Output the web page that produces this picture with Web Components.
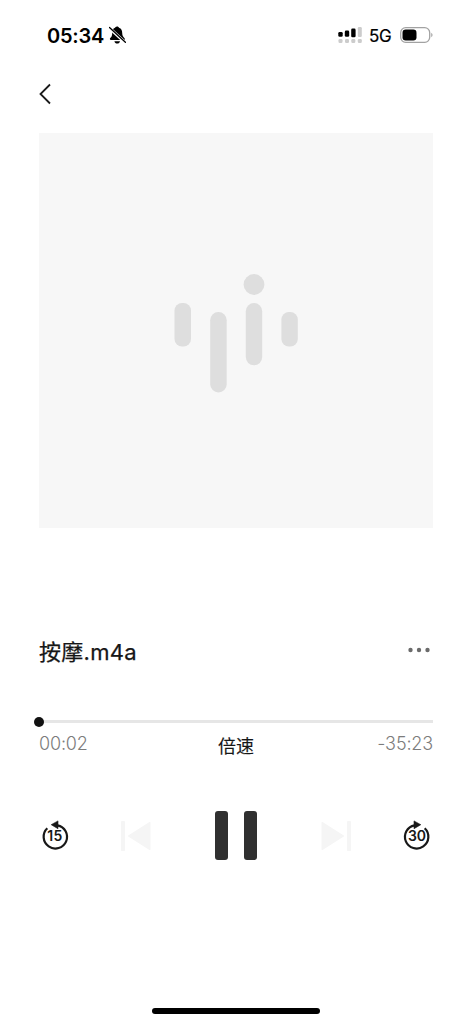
<!DOCTYPE html>
<html lang="zh">
<head>
<meta charset="utf-8">
<title>按摩.m4a</title>
<style>
html,body{margin:0;height:100%;background:#fff}
body{overflow:hidden;font-family:Inter,"Noto Sans CJK SC",sans-serif;color:#111}
</style>
</head>
<body>
<audio-player></audio-player>
<script>
function define(name, html) {
  const t = document.createElement('template');
  t.innerHTML = html;
  customElements.define(name, class extends HTMLElement {
    constructor() {
      super();
      this.attachShadow({mode: 'open'}).append(t.content.cloneNode(true));
    }
  });
}

define('status-bar', `
<style>
:host{display:flex;align-items:center;height:70px;padding:0 38px 0 47px;box-sizing:border-box;color:#000}
svg{display:block;flex:none}
time{font-size:20px;font-weight:600;line-height:24px;width:62px;white-space:nowrap;letter-spacing:-.2px;padding-top:2px}
.net{font-size:17px;font-weight:400;-webkit-text-stroke:.2px;line-height:22px;width:31px;margin-left:7px;letter-spacing:-.3px;padding-top:2px}
.gap{flex:1}
</style>
<time>05:34</time>
<svg width="17" height="18" viewBox="0 0 17 18"><path d="M8 0.500c-1.200 0-1.800.8-2 1.300C3.800 2.700 3.200 4.500 3.200 7c0 3-.7 3.700-2 5.100-.7.8-.3 1.900.7 1.900h12.900c1 0 1.400-1 .7-1.800-1.600-1.700-2.200-2.200-2.300-5.200 0-2.600-.8-4.400-3.200-5.200C9.800 1.200 9.200.5 8 .5z"/><path d="M5.400 15.200h5.600c-.3 1.500-1.400 2.300-2.800 2.300s-2.500-.8-2.800-2.300z"/><path d="M.3 1.900l16 14.800" stroke="#fff" stroke-width="3"/><path d="M.5 1.400l15.900 14.800" stroke="#000" stroke-width="1.300" stroke-linecap="round"/></svg>
<span class="gap"></span>
<svg width="24" height="18" viewBox="0 0 24 18"><g fill="#000"><rect x=".3" y="6" width="4.400" height="4.800" rx="1.300"/><rect x="6.800" y="4.600" width="4.400" height="6.200" rx="1.300"/><rect x="13.200" y="2.600" width="4.400" height="8.600" rx="1.300"/></g><g fill="#ccc"><rect x="19.800" y="1" width="4" height="10" rx="1.200"/><rect x=".5" y="13" width="4" height="4" rx="1.200"/><rect x="7" y="13" width="4" height="4" rx="1.200"/><rect x="13.300" y="13" width="4" height="4" rx="1.200"/><rect x="19.800" y="13" width="4" height="4" rx="1.200"/></g></svg>
<span class="net">5G</span>
<svg width="34" height="18" viewBox="0 0 34 18"><rect x=".7" y="1.700" width="29" height="14.600" rx="5" fill="#fff" stroke="#a2a2a2" stroke-width="1.300"/><rect x="2.500" y="3.500" width="14" height="11" rx="3.200"/><path d="M31.300 6.800c1.600.8 1.600 3.600 0 4.400z" fill="#999"/></svg>`);

define('back-button', `
<style>
:host{display:flex;align-items:center;height:48px;padding-left:39px}
svg{display:block}
</style>
<svg width="12" height="22" viewBox="0 0 12 22"><path d="M11 1.500L1.500 11l9.500 9.500" fill="none" stroke="#1a1a1a" stroke-width="1.800"/></svg>`);

define('cover-art', `
<style>
:host{display:block;height:395px;margin:15px 39px 0;background:#f7f7f7}
svg{display:block;width:100%;height:100%}
</style>
<svg viewBox="39 133 394 395" fill="#dedede"><rect x="174.500" y="303" width="16.500" height="43.500" rx="7.500"/><rect x="210.200" y="312" width="16.500" height="80.500" rx="8.200"/><rect x="245.800" y="303" width="16.400" height="62.300" rx="8.200"/><rect x="281.400" y="312" width="16.400" height="34.500" rx="7.500"/><circle cx="254" cy="284.500" r="10.400"/></svg>`);

define('track-title', `
<style>
:host{display:flex;align-items:center;justify-content:space-between;height:32px;margin:108px 39px 0}
h1{margin:0;font-size:22px;font-weight:400;-webkit-text-stroke:.25px;letter-spacing:.3px;line-height:32px;white-space:nowrap;color:#161616}
svg{display:block;margin:-5px 3px 0 0}
</style>
<h1><slot></slot></h1>
<svg width="22" height="6" viewBox="0 0 22 6" fill="#6b6b6b"><circle cx="2.500" cy="3" r="2.200"/><circle cx="11" cy="3" r="2.200"/><circle cx="19.500" cy="3" r="2.200"/></svg>`);

define('seek-bar', `
<style>
:host{display:block;margin:48.500px 39px 0}
.rail{display:flex;align-items:center;height:10px;background:linear-gradient(#e6e6e6,#e6e6e6) 0 50%/100% 3px no-repeat}
.knob{width:10px;height:10px;border-radius:50%;background:#111;margin-left:-5px}
.labels{display:grid;grid-template-columns:1fr auto 1fr;line-height:24px;height:26px;font-size:18px;color:#7c7c7c;font-weight:350;letter-spacing:-.15px;padding-top:5.500px}
.speed{color:#161616;font-weight:400;-webkit-text-stroke:.15px;letter-spacing:0;padding-top:3px}
.left{text-align:right}
</style>
<div class="rail"><div class="knob"></div></div>
<div class="labels"><span>00:02</span><span class="speed">倍速</span><span class="left">-35:23</span></div>`);

define('skip-button', `
<style>
:host{display:grid;width:32px;height:32px;place-items:center}
svg,span{grid-area:1/1}
svg{display:block}
:host([forward]) svg{transform:scaleX(-1)}
span{font-size:14px;font-weight:600;line-height:16px;letter-spacing:-.1px;color:#181818;padding-top:1px}
:host(:not([forward])) span{letter-spacing:.3px}
</style>
<svg width="32" height="32" viewBox="0 0 32 32"><path d="M8.300 8.300A11.700 11.700 0 1 0 18.500 5.300" fill="none" stroke="#181818" stroke-width="2.200"/><path d="M12.200 4.700L19 .9v7.800z" fill="#181818" stroke="#181818" stroke-width=".6" stroke-linejoin="round"/></svg>
<span><slot></slot></span>`);

define('track-button', `
<style>
:host{display:block;margin-left:-14px}
:host([forward]){margin:0 -14px 0 0}
svg{display:block}
:host([forward]) svg{transform:scaleX(-1)}
</style>
<svg width="30" height="30" viewBox="0 0 30 30" fill="#f5f5f5"><rect x="0" y="0" width="4" height="30" rx=".8"/><path d="M7.300 15L29 1.200v27.600z" stroke="#f5f5f5" stroke-linejoin="round"/></svg>`);

define('pause-button', `
<style>
:host{display:flex;justify-content:space-between;width:42px;height:49px}
i{width:13px;border-radius:3px;background:#303030}
</style><i></i><i></i>`);

define('player-controls', `
<style>
:host{display:flex;align-items:center;justify-content:space-between;height:49px;margin:53px 39px 0}
</style>
<skip-button>15</skip-button><track-button></track-button><pause-button></pause-button><track-button forward></track-button><skip-button forward>30</skip-button>`);

define('home-indicator', `
<style>:host{display:block;width:168px;height:6px;border-radius:3px;background:#000;margin:auto auto 10px}</style>`);

define('audio-player', `
<style>:host{display:flex;flex-direction:column;width:472px;height:1024px;background:#fff}</style>
<status-bar></status-bar><back-button></back-button><cover-art></cover-art>
<track-title>按摩.m4a</track-title><seek-bar></seek-bar><player-controls></player-controls><home-indicator></home-indicator>`);
</script>
</body>
</html>
